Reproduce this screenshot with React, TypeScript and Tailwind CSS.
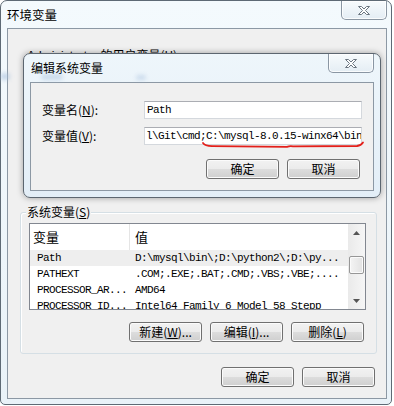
import React from "react";

function CloseX() {
  return (
    <svg width="14" height="11" viewBox="0 0 14 11">
      <path
        d="M1.5 1.5h3l2.5 2.5 2.5-2.5h3l-4 4 4 4h-3L7 7 4.5 9.5h-3l4-4z"
        fill="#ffffff"
        stroke="#6a7580"
        strokeWidth="1"
        strokeLinejoin="round"
      />
    </svg>
  );
}

function CloseBtn() {
  return (
    <div className="flex h-[19px] w-[46px] items-center justify-center rounded-b-[5px] border border-t-0 border-[#8a96a3] bg-[linear-gradient(#f7fbfd,#e4edf4)] shadow-[inset_0_0_0_1px_rgba(255,255,255,0.8)]">
      <CloseX />
    </div>
  );
}

function Btn({ children }: { children: React.ReactNode }) {
  return (
    <div className="flex h-[20px] w-[73px] items-center justify-center rounded-[3px] border border-[#707070] bg-[linear-gradient(#f2f2f2,#ebebeb_50%,#dddddd_50%,#cfcfcf)] text-[12px] leading-none text-black shadow-[inset_0_0_0_1px_#fbfbfb]">
      {children}
    </div>
  );
}

const rows = [
  { n: "Path", v: "D:\\mysql\\bin\\;D:\\python2\\;D:\\py...", sel: true },
  { n: "PATHEXT", v: ".COM;.EXE;.BAT;.CMD;.VBS;.VBE;....", sel: false },
  { n: "PROCESSOR_AR...", v: "AMD64", sel: false },
  { n: "PROCESSOR_ID...", v: "Intel64 Family 6 Model 58 Stepp", sel: false },
];

export default function App() {
  return (
    <div className="relative h-[406px] w-[394px] overflow-hidden bg-white font-['Noto_Sans_CJK_SC',sans-serif] text-[12px] text-black">
      {/* main window */}
      <div className="flex h-[405px] w-[392px] flex-col rounded-t-[7px] rounded-b-[5px] border border-[#5e6a75] bg-[linear-gradient(#f4fafd,#e9f2f8)]">
        <div className="flex h-[27px] items-start justify-between">
          <div className="pl-[6px] pt-[7px] text-[12.5px] leading-[14px]">环境变量</div>
          <div className="mr-[4px]">
            <CloseBtn />
          </div>
        </div>
        <div className="ml-[6px] flex h-[371px] w-[380px] flex-col border border-[#8c98a4] bg-[#f0f0f0]">
          {/* user variables (hidden behind dialog) */}
          <div className="h-[177px] pl-[19px] pt-[20px] leading-[12px]">
            <span className="font-['Liberation_Sans',sans-serif]">Administrator</span> 的用户变量(<u>U</u>)
          </div>
          {/* system variables group */}
          <div className="relative ml-[12px] mr-[9px] pt-[6px]">
            <div className="flex h-[142px] flex-col rounded-[3px] border border-[#d5dfe5] pb-[11px] pl-[8px] pr-[10px] pt-[10px] shadow-[inset_1px_1px_0_#ffffff]">
              <div className="flex h-[87px] border border-[#828790] bg-white">
                <div className="flex-1 overflow-hidden">
                  <div className="flex h-[26px] items-center bg-white text-[13px]">
                    <div className="flex h-full w-[100px] items-center border-r border-[#e5e5e5] pl-[3px]">变量</div>
                    <div className="pl-[5px]">值</div>
                  </div>
                  {rows.map((r) => (
                    <div
                      key={r.n}
                      className={
                        "flex h-[16px] items-center whitespace-nowrap font-['Liberation_Mono',monospace] text-[11px] leading-none tracking-[-0.6px] " +
                        (r.sel ? "bg-[#eeeeee]" : "bg-white")
                      }
                    >
                      <div className="w-[100px] pl-[7px]">{r.n}</div>
                      <div className="pl-[5px]">{r.v}</div>
                    </div>
                  ))}
                </div>
                {/* scrollbar */}
                <div className="flex w-[17px] flex-col bg-[linear-gradient(90deg,#eaeaea,#f6f6f6)]">
                  <div className="flex h-[17px] items-center justify-center">
                    <svg width="7" height="4" viewBox="0 0 7 4">
                      <path d="M0 4L3.5 0L7 4z" fill="#555" />
                    </svg>
                  </div>
                  <div className="h-[15px]" />
                  <div className="mx-[1px] h-[18px] rounded-[2px] border border-[#979797] bg-[linear-gradient(90deg,#f4f4f4,#e2e2e2)] shadow-[inset_0_0_0_1px_#fbfbfb]" />
                  <div className="flex-1" />
                  <div className="flex h-[17px] items-center justify-center">
                    <svg width="7" height="4" viewBox="0 0 7 4">
                      <path d="M0 0L3.5 4L7 0z" fill="#555" />
                    </svg>
                  </div>
                </div>
              </div>
              <div className="mt-[12px] flex justify-end gap-[8px] pr-[2px]">
                <Btn>
                  新建(<u>W</u>)...
                </Btn>
                <Btn>
                  编辑(<u>I</u>)...
                </Btn>
                <Btn>
                  删除(<u>L</u>)
                </Btn>
              </div>
            </div>
            <div className="absolute left-[6px] top-0 bg-[#f0f0f0] px-[1px] leading-[12px]">
              系统变量(<u>S</u>)
            </div>
          </div>
          <div className="mt-[13px] flex justify-end gap-[8px] pr-[11px]">
            <Btn>确定</Btn>
            <Btn>取消</Btn>
          </div>
        </div>
      </div>

      {/* blurred glass artifact at left */}
      <div className="absolute left-[0px] top-[73px] h-[7px] w-[10px] rounded-full bg-[#a9c1de] opacity-60 blur-[2px]" />

      {/* edit dialog */}
      <div className="absolute left-[23px] top-[53px] flex h-[145px] w-[358px] flex-col rounded-[7px] border border-[#5c6670] bg-[linear-gradient(#eef6fb,#e3eef7)] shadow-[0_0_6px_rgba(0,0,0,0.35)]">
        <div className="relative flex h-[28px] items-start justify-between">
          <div className="pl-[7px] pt-[8px] leading-[12px]">编辑系统变量</div>
          <div className="mr-[6px]">
            <CloseBtn />
          </div>
          <div className="absolute left-[17px] top-[20px] h-[6px] w-[22px] rounded-full bg-[#a9c1de] opacity-50 blur-[2px]" />
          <div className="absolute left-[112px] top-[21px] h-[5px] w-[10px] rounded-full bg-[#a9c1de] opacity-50 blur-[2px]" />
        </div>
        <div className="ml-[6px] flex h-[109px] w-[344px] flex-col border border-[#8c98a4] bg-[#f0f0f0] pt-[18px]">
          <div className="flex items-center">
            <div className="w-[113px] pl-[11px] leading-[12px]">
              变量名(<u>N</u>):
            </div>
            <div className="flex h-[18px] w-[218px] items-center border border-[#d4d8dd] border-t-[#abadb3] bg-white pl-[2px] font-['Liberation_Mono',monospace] text-[11px] tracking-[-0.6px]">
              Path
            </div>
          </div>
          <div className="relative mt-[8px] flex items-center">
            <div className="w-[113px] pl-[11px] leading-[12px]">
              变量值(<u>V</u>):
            </div>
            <div className="flex h-[18px] w-[218px] items-center overflow-hidden whitespace-nowrap border border-[#d4d8dd] border-t-[#abadb3] bg-white pl-[1px] font-['Liberation_Mono',monospace] text-[11px] tracking-[-0.6px]">
              l\Git\cmd;C:\mysql-8.0.15-winx64\bin
            </div>
            <svg
              className="absolute left-[170px] top-[14px]"
              width="164"
              height="8"
              viewBox="0 0 164 8"
            >
              <path
                d="M2 2 Q4 5 11 5.2 L86 5.8 Q89 4.8 92 5.4 L156 5 Q160 4.5 162 1.5"
                fill="none"
                stroke="#e3201b"
                strokeWidth="1.8"
                strokeLinecap="round"
              />
            </svg>
          </div>
          <div className="mt-[14px] flex justify-end gap-[8px] pr-[13px]">
            <Btn>确定</Btn>
            <Btn>取消</Btn>
          </div>
        </div>
      </div>
    </div>
  );
}
